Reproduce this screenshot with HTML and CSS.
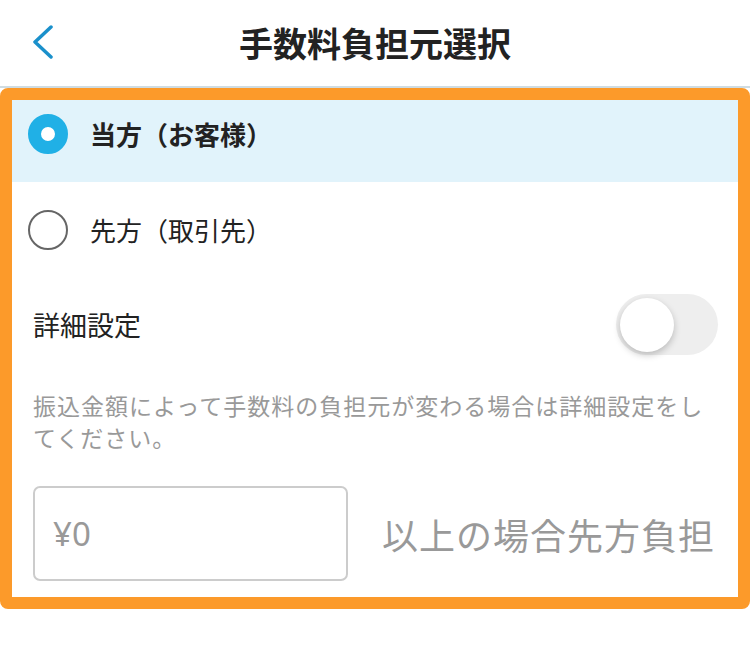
FILE: index.html
```html
<!DOCTYPE html>
<html lang="ja">
<head>
  <meta charset="UTF-8">
  <title>手数料負担元選択</title>
  <link rel="stylesheet" href="styles.css">
</head>
<body>
  <header class="cabecera">
    <div class="volver">
      <svg width="22" height="36" viewBox="0 0 22 36">
        <path d="M19 2 L3 17 L19 32" fill="none" stroke="#1a90cb" stroke-width="3.5" stroke-linecap="round" stroke-linejoin="round"/>
      </svg>
    </div>
    <h1 class="titulo">手数料負担元選択</h1>
    <div></div>
  </header>

  <div class="marco">
    <div class="opcion seleccionada">
      <span class="radio activo"></span>
      <span class="etiqueta negrita">当方（お客様）</span>
    </div>

    <div class="opcion">
      <span class="radio"></span>
      <span class="etiqueta">先方（取引先）</span>
    </div>

    <div class="ajuste">
      <span class="ajuste-texto">詳細設定</span>
      <span class="interruptor"><span class="perilla"></span></span>
    </div>

    <p class="nota">振込金額によって手数料の負担元が変わる場合は詳細設定をしてください。</p>

    <div class="importe">
      <div class="caja">¥0</div>
      <span class="sufijo">以上の場合先方負担</span>
    </div>
  </div>
</body>
</html>
```

FILE: styles.css
```css
body {
  margin: 0;
  background: #ffffff;
  font-family: "Noto Sans CJK JP", "Noto Sans", sans-serif;
  color: #222222;
}

.cabecera {
  height: 86px;
  display: grid;
  grid-template-columns: 1fr auto 1fr;
  align-items: center;
  border-bottom: 2px solid #cfdce2;
}

.volver {
  padding-left: 32px;
  display: flex;
  align-items: center;
  height: 36px;
}

.titulo {
  margin: 0;
  font-size: 34px;
  font-weight: bold;
  color: #222222;
  line-height: 1;
}

.marco {
  border: 12px solid #fc9a2a;
  border-radius: 8px;
  background: #ffffff;
}

.opcion {
  display: flex;
  align-items: center;
  gap: 22px;
  padding: 28px 16px;
}

.seleccionada {
  background: #e1f3fb;
  padding-top: 14px;
  padding-bottom: 28px;
}

.radio {
  width: 40px;
  height: 40px;
  box-sizing: border-box;
  border-radius: 50%;
  border: 2px solid #666666;
  background: #ffffff;
  flex-shrink: 0;
}

.radio.activo {
  border: 13px solid #20b0e6;
}

.etiqueta {
  font-size: 26px;
  line-height: 40px;
}

.negrita {
  font-weight: bold;
}

.ajuste {
  display: flex;
  align-items: center;
  justify-content: space-between;
  padding: 16px 20px 0 21px;
}

.ajuste-texto {
  font-size: 27px;
}

.interruptor {
  width: 102px;
  height: 61px;
  border-radius: 31px;
  background: #eeeeee;
  display: flex;
  align-items: center;
  padding-left: 4px;
  box-sizing: border-box;
}

.perilla {
  width: 54px;
  height: 54px;
  border-radius: 50%;
  background: #ffffff;
  box-shadow: 0 3px 7px rgba(0, 0, 0, 0.22);
}

.nota {
  margin: 34px 0 0;
  padding: 0 21px;
  font-size: 23px;
  letter-spacing: 1px;
  line-height: 32px;
  color: #999999;
}

.importe {
  display: flex;
  align-items: center;
  gap: 34px;
  margin-top: 33px;
  padding: 0 21px 16px;
}

.caja {
  width: 315px;
  height: 95px;
  box-sizing: border-box;
  border: 2px solid #cccccc;
  border-radius: 7px;
  display: flex;
  align-items: center;
  padding-left: 18px;
  font-family: "Noto Sans", sans-serif;
  font-size: 33px;
  color: #999999;
}

.sufijo {
  font-size: 36px;
  letter-spacing: 1px;
  color: #999999;
}
```
